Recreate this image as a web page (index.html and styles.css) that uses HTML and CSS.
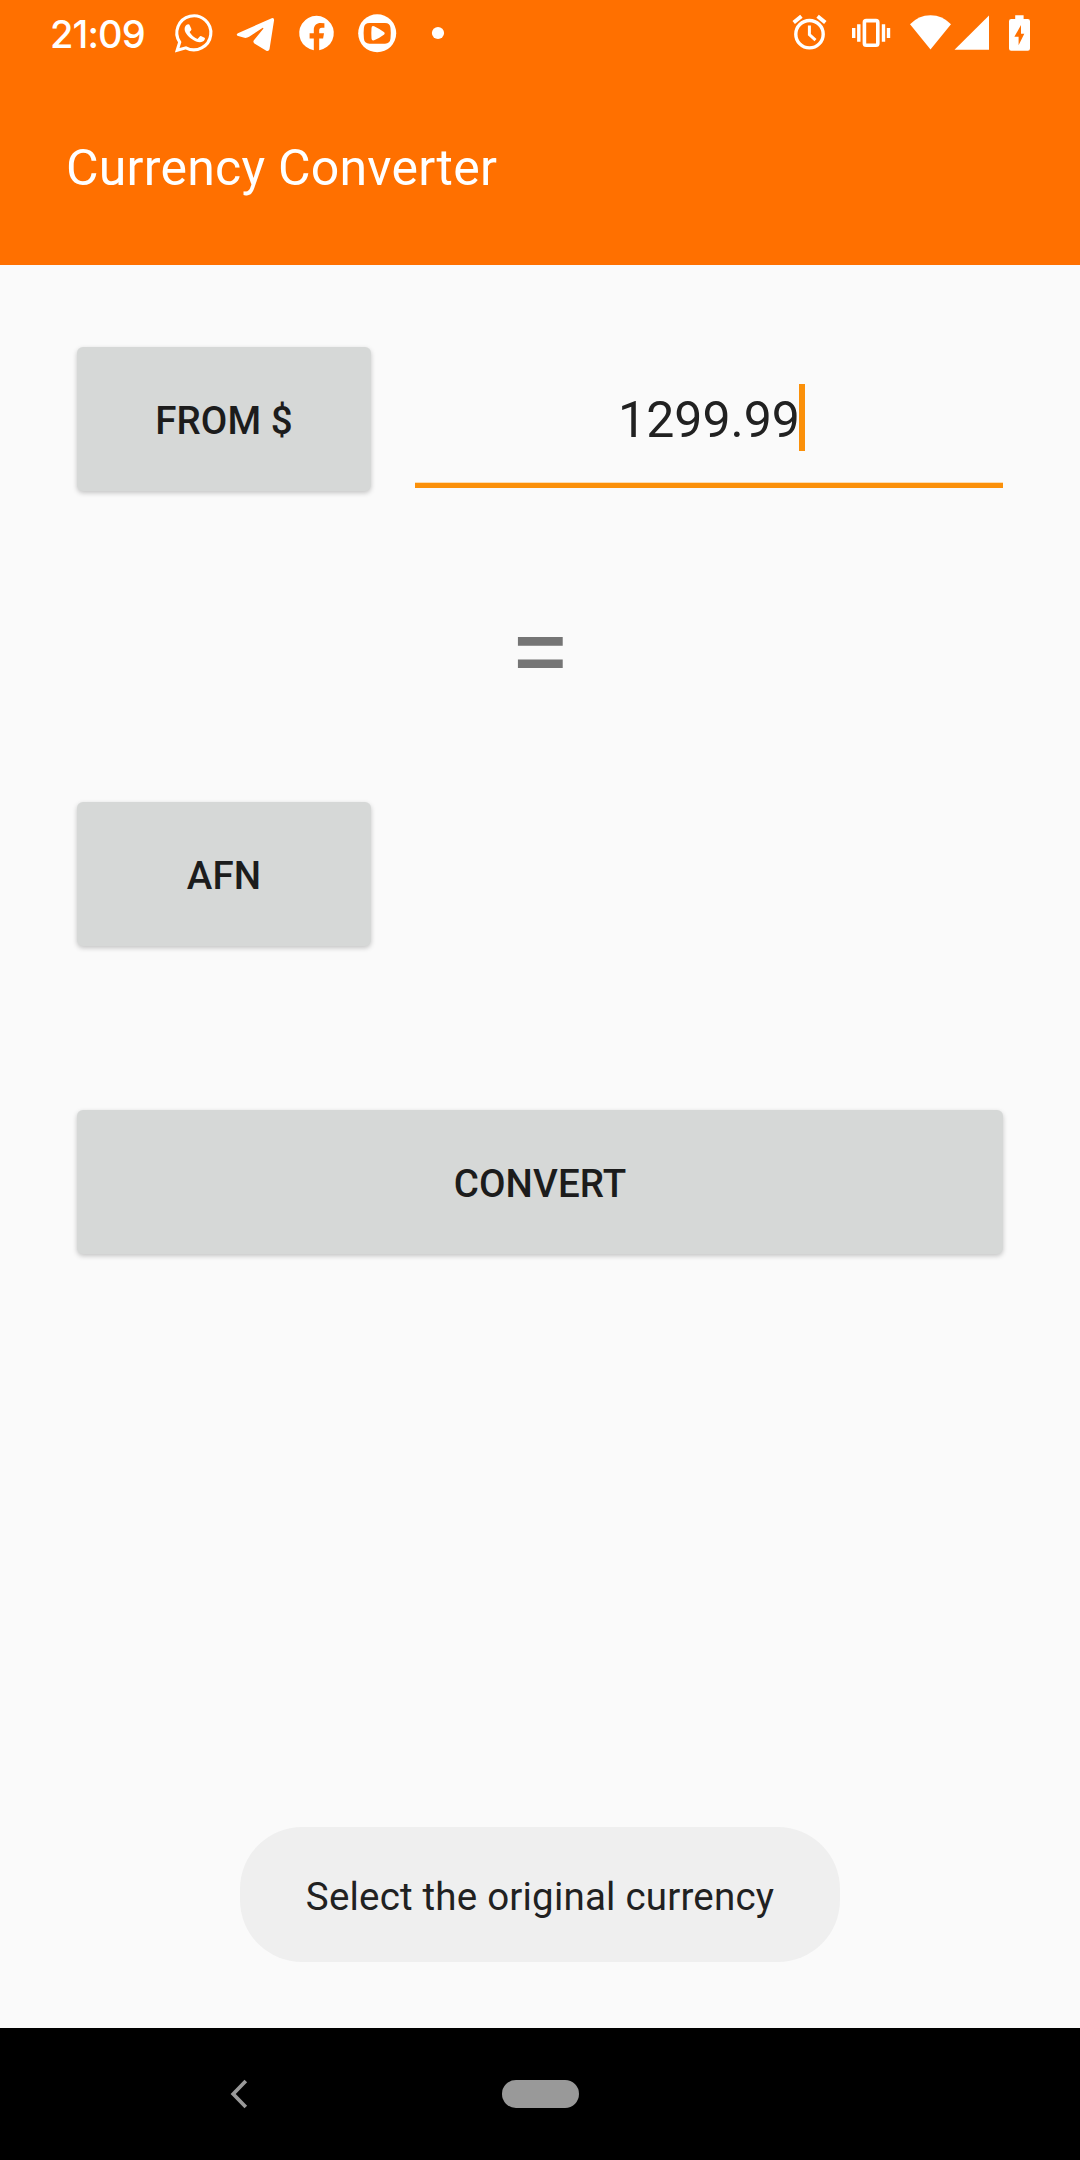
FILE: index.html
```html
<!DOCTYPE html>
<html lang="en">
<head>
<meta charset="utf-8">
<title>Currency Converter</title>
<link rel="stylesheet" href="styles.css">
</head>
<body>
<div class="screen">
  <header class="header">
    <div class="status">
      <span class="clock">21:09</span>
      <div class="notifications">
        <svg width="61" height="66" viewBox="-30.5 -33 61 66"><path d="M-14.8 9.2 A17 17 0 1 1 -8.6 14.8 L-17.3 17.2 Z" fill="none" stroke="#fff" stroke-width="3.1" stroke-linejoin="miter"/><path d="M-7.8 -8.3 Q-6.8 -9.2 -5.2 -8.6 Q-3.7 -5.6 -3 -3.8 Q-3 -2.8 -4.9 -.9 Q-2.1 4 3 5.9 L5.5 3.2 Q6.2 2.9 7 3.2 L10.5 5.1 Q10.3 8.9 5.6 9.3 C1 9.5 -6 4.5 -8.3 .5 C-10.5 -3 -10.4 -6.1 -7.8 -8.3Z" fill="#fff"/></svg>
        <svg width="61" height="66" viewBox="-30.5 -33 61 66"><path d="M-17.6 .2 L16.2 -14.8 Q18.6 -15.4 18.6 -13 L14 16.3 Q13.2 18.8 10.8 17.8 L-1.1 10.4 Q-3 8.8 -1.4 7 L8 -4.5 L7.3 -5.3 L-6.4 3.8 Q-9.2 5.5 -12 4.6 L-17.3 3.1 Q-20.1 1.8 -17.6 .2Z" fill="#fff"/></svg>
        <svg width="61" height="66" viewBox="-30.5 -33 61 66"><path d="M-2.7 17.2 V5.5 H-6.9 V.2 H-2.7 V-3 C-2.7 -7.7 .1 -10 4.2 -10 L7.9 -9.7 V-5.3 H5.5 C3.3 -5.3 2.7 -4 2.7 -2.5 V.2 H7.5 L6.6 5.5 H2.7 V17.2 A17.3 17.3 0 1 0 -2.7 17.2Z" fill="#fff"/></svg>
        <svg width="61" height="66" viewBox="-30.5 -33 61 66"><circle cx="-.3" cy=".2" r="19" fill="#fff"/><path d="M-8 -10 H7.5 Q12.6 -10 13 -5 Q13.6 .2 13 5.5 Q12.6 10.5 7.5 10.7 H-8 Q-13.2 10.5 -13.6 5.5 Q-14.2 .2 -13.6 -5 Q-13.2 -10 -8 -10Z" fill="#ff7000"/><path d="M-6 -5 Q-5.8 -7.8 -3.4 -6.7 Q2.7 -3.8 6.7 -.8 Q7.8 .3 6.7 1.4 Q2.7 4.5 -3.4 7.3 Q-5.8 8 -6 5.5 Q-6.4 .2 -6 -5Z" fill="#fff"/></svg>
        <svg width="61" height="66" viewBox="-30.5 -33 61 66"><circle cx="-.5" cy="0" r="6.1" fill="#fff"/></svg>
      </div>
      <div class="system">
        <svg width="60" height="66" viewBox="0 0 60 66" fill="none" stroke="#fff"><circle cx="29.5" cy="34.2" r="13.7" stroke-width="3.4"/><path d="M29.4 25.6 V34.7 L35.5 40.2" stroke-width="3"/><path d="M13.7 22.4 L21.4 16.2 M37.6 16.2 L45.3 22.4" stroke-width="3.9"/></svg>
        <svg width="62" height="66" viewBox="0 0 62 66" fill="none" stroke="#fff"><rect x="24.4" y="20.6" width="13.4" height="24.7" rx="1.8" stroke-width="3.6"/><path d="M13.7 28 V38 M48.5 28 V38" stroke-width="3.4"/><path d="M18.8 24.2 V41.8 M43.5 24.2 V41.8" stroke-width="3.4"/></svg>
        <svg width="50" height="66" viewBox="0 0 50 66"><path d="M8 24.3 Q16.5 15.2 28.5 15.2 Q40.5 15.2 49 24.3 L28.5 49.5Z" fill="#fff"/></svg>
        <svg width="40" height="66" viewBox="0 0 40 66"><path d="M37 15.5 V49.7 H2.5Z" fill="#fff"/></svg>
        <svg width="48" height="66" viewBox="0 0 48 66"><path d="M23.2 15.3 H31.6 V19 H35.8 Q38 19 38 21.2 V48.5 Q38 50.7 35.8 50.7 H19.2 Q17 50.7 17 48.5 V21.2 Q17 19 19.2 19 H23.2Z" fill="#fff"/><path d="M29 25 L22.4 36.8 H26.6 V45.3 L32.3 33.8 H29Z" fill="#ff7000"/></svg>
      </div>
    </div>
    <h1 class="title">Currency Converter</h1>
  </header>
  <main class="content">
    <div class="row">
      <button class="button currency">FROM $</button>
      <div class="field"><span class="amount">1299.99</span><span class="caret"></span></div>
    </div>
    <div class="equals">=</div>
    <button class="button currency">AFN</button>
    <button class="button convert">CONVERT</button>
    <div class="toast">Select the original currency</div>
  </main>
  <nav class="navbar">
    <svg class="back" width="20" height="30" viewBox="0 0 20 30"><path d="M15.8 2 L3.2 15 L15.8 28" fill="none" stroke="#999" stroke-width="3.7"/></svg>
    <span class="home"></span>
  </nav>
</div>
</body>
</html>
```
FILE: styles.css
```css
* {
  box-sizing: border-box;
}

body {
  margin: 0;
  background: #fafafa;
  font-family: Roboto, "Liberation Sans", sans-serif;
  color: #212121;
}

svg {
  display: block;
  flex: none;
}

.screen {
  width: 1080px;
  height: 2160px;
  display: flex;
  flex-direction: column;
}

.header {
  height: 265px;
  background: #ff7000;
  color: #fff;
}

.status {
  display: flex;
  height: 66px;
  padding: 0 40px 0 50px;
}

.clock {
  width: 114px;
  font: 500 38px/69px Inter, sans-serif;
  letter-spacing: -0.9px;
}

.notifications,
.system {
  display: flex;
}

.system {
  margin-left: auto;
}

.title {
  margin: 0;
  padding-left: 66px;
  font-size: 50px;
  font-weight: 400;
  letter-spacing: 0.23px;
  line-height: 205px;
  height: 199px;
}

.content {
  flex: 1;
  padding: 82px 77px 0;
  display: flex;
  flex-direction: column;
  align-items: flex-start;
}

.row {
  display: flex;
  align-items: flex-start;
  gap: 44px;
  width: 100%;
}

.button {
  height: 144px;
  padding: 4px 0 0;
  border: 0;
  border-radius: 6px;
  background: #d6d8d7;
  color: #1c1c1c;
  font: 500 38.5px/140px Roboto, sans-serif;
  letter-spacing: 0.1px;
  text-align: center;
  box-shadow: 0 2px 5px rgba(0, 0, 0, 0.22);
}

.currency {
  width: 294px;
}

.field {
  flex: 1;
  height: 141px;
  display: flex;
  justify-content: center;
  border-bottom: 5px solid #fb9009;
  box-shadow: inset 0 -1px #fddcae;
}

.amount {
  font-size: 50px;
  line-height: 147px;
  padding-left: 5px;
}

.caret {
  width: 6px;
  height: 67px;
  margin: 37px 0 0 -1px;
  background: #fb9009;
}

.equals {
  align-self: center;
  height: 311px;
  font-size: 110px;
  line-height: 322px;
  color: #757575;
}

.convert {
  width: 926px;
  margin-top: 164px;
}

.toast {
  align-self: center;
  width: 600px;
  height: 135px;
  margin: auto 0 66px;
  border-radius: 62px;
  background: #efefef;
  font-size: 38.5px;
  letter-spacing: 0.2px;
  line-height: 140px;
  text-align: center;
}

.navbar {
  display: grid;
  grid-template-columns: 1fr 77px 1fr;
  align-items: center;
  height: 132px;
  background: #000;
}

.back {
  margin-left: 230px;
}

.home {
  height: 28px;
  border-radius: 14px;
  background: #999;
}
```
